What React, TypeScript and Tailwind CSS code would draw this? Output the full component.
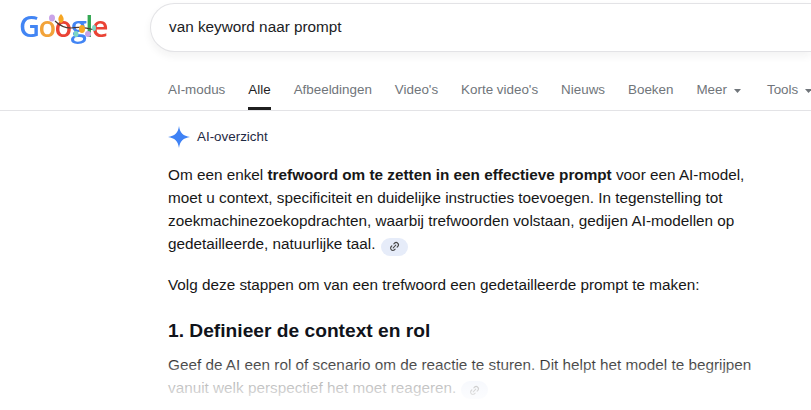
import React from "react";
import { Link2 } from "lucide-react";

const tabs = ["AI-modus", "Alle", "Afbeeldingen", "Video's", "Korte video's", "Nieuws", "Boeken", "Meer", "Tools"];

const Logo = () => (
  <div className="relative ml-[19px] h-[44px] w-[90px] shrink-0">
    <div className="flex h-[44px] items-center font-['Open_Sans',sans-serif] text-[29px] leading-none tracking-[-1.6px] font-semibold blur-[0.4px]">
      <span className="text-[#4285f4]">G</span>
      <span className="text-[#f2a33a]">o</span>
      <span className="text-[#ea4335]">o</span>
      <span className="text-[#4285f4]">g</span>
      <span className="text-[#34a853]">l</span>
      <span className="text-[#ea4335]">e</span>
    </div>
    {/* lichtjes */}
    <svg className="absolute left-0 top-0" width="90" height="44" viewBox="0 0 90 44" fill="none">
      <path d="M36 18 C40 22 46 25 52 25 C58 24 66 24 76 27" stroke="#4a3a35" strokeWidth="1.2" />
      <path d="M42 11 C38 15 39 19 42 20 C45 19 46 15 42 11Z" fill="#f6a623" />
      <ellipse cx="33" cy="15" rx="3" ry="3.5" fill="#c9a4e8" />
      <ellipse cx="57" cy="31" rx="2.5" ry="3" fill="#7fd6c6" />
      <ellipse cx="63" cy="26" rx="3" ry="4" fill="#f6a623" />
      <ellipse cx="69" cy="31" rx="3" ry="3" fill="#c9a4e8" />
      <ellipse cx="75" cy="25" rx="2" ry="3" fill="#7fd6c6" />
    </svg>
  </div>
);

const SearchBar = () => (
  <div className="ml-[41px] flex h-[49px] flex-1 items-center rounded-l-[25px] border border-r-0 border-[#e3e3e6] bg-white pl-[18px] shadow-[0_4px_8px_rgba(32,33,36,0.06)]">
    <span className="text-[15.3px] text-[#202124]">van keyword naar prompt</span>
  </div>
);

const Caret = () => (
  <svg className="ml-[7px]" width="7" height="4" viewBox="0 0 7 4">
    <path d="M0 0h7L3.5 4z" fill="#70757a" />
  </svg>
);

const NavTabs = () => (
  <nav className="mt-[21px] flex h-[37px] items-start gap-[23px] overflow-hidden border-b border-[#e3e3e6] pl-[168px] text-[13.4px] text-[#70757a]">
    {tabs.map((t) => (
      <div
        key={t}
        className={`flex h-[36px] shrink-0 items-center whitespace-nowrap border-b-[3px] ${
          t === "Alle" ? "border-[#1f1f1f] text-[#1f1f1f]" : "border-transparent"
        } ${t === "Meer" ? "mr-[3px]" : ""}`}
      >
        {t}
        {(t === "Meer" || t === "Tools") && <Caret />}
      </div>
    ))}
  </nav>
);

const LinkChip = () => (
  <span className="ml-[5px] inline-flex h-[18px] w-[27px] items-center justify-center rounded-full bg-[#e6ecf9] align-[-3px]">
    <Link2 size={11} strokeWidth={2.4} className="-rotate-45 text-[#474747]" />
  </span>
);

const Overview = () => (
  <main className="relative h-[299px] overflow-hidden pl-[168px] pr-[48px] text-[#171717]">
    <div className="mt-[14px] flex h-[24px] items-center">
      <svg width="22" height="22" viewBox="0 0 22 22">
        <path d="M11 0C11.8 6.6 15.4 10.2 22 11 15.4 11.8 11.8 15.4 11 22 10.2 15.4 6.6 11.8 0 11 6.6 10.2 10.2 6.6 11 0Z" fill="#3f82f5" />
      </svg>
      <span className="ml-[7px] text-[13.4px] text-[#1f2a44]">AI-overzicht</span>
    </div>
    <p className="mt-[14px] text-[15.3px] leading-[23.04px]">
      Om een enkel <b>trefwoord om te zetten in een effectieve prompt</b> voor een AI-model, moet u context, specificiteit en duidelijke instructies toevoegen. In tegenstelling tot zoekmachinezoekopdrachten, waarbij trefwoorden volstaan, gedijen AI-modellen op gedetailleerde, natuurlijke taal.
      <LinkChip />
    </p>
    <p className="mt-[17px] text-[15.3px] leading-[23.04px]">
      Volg deze stappen om van een trefwoord een gedetailleerde prompt te maken:
    </p>
    <h2 className="mt-[22px] text-[19.2px] leading-[26px] font-bold text-[#10131a]">1. Definieer de context en rol</h2>
    <p className="mt-[9px] text-[15.3px] leading-[23.04px]">
      Geef de AI een rol of scenario om de reactie te sturen. Dit helpt het model te begrijpen vanuit welk perspectief het moet reageren.
      <LinkChip />
    </p>
    {/* uitfaden onderaan */}
    <div className="absolute inset-x-0 bottom-0 h-[54px] bg-gradient-to-b from-white/0 via-white/70 to-white" />
  </main>
);

export default function App() {
  return (
    <div className="h-[410px] w-[811px] overflow-hidden bg-white font-['Liberation_Sans',Arial,sans-serif]">
      <header className="flex h-[53px] items-start pt-[3px]">
        <Logo />
        <SearchBar />
      </header>
      <NavTabs />
      <Overview />
    </div>
  );
}
